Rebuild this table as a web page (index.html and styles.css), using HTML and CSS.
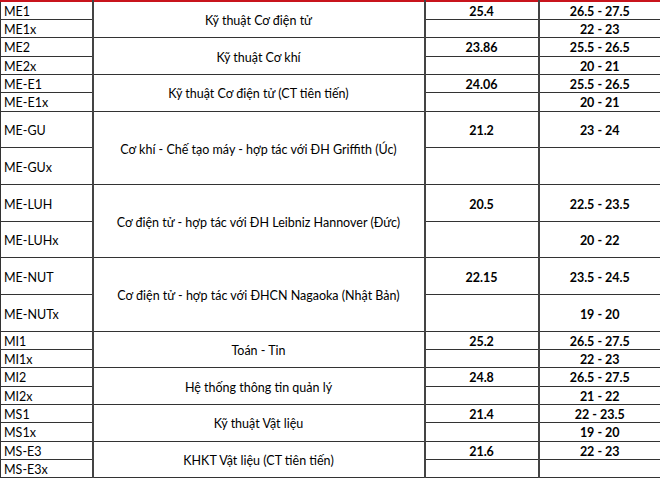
FILE: index.html
```html
<!DOCTYPE html>
<html lang="vi">
<head>
<meta charset="utf-8">
<title>Điểm chuẩn</title>
<link rel="stylesheet" href="styles.css">
</head>
<body>
<table class="scores">
  <colgroup>
    <col class="c-code"><col class="c-name"><col class="c-score"><col class="c-range">
  </colgroup>
  <tbody>
    <tr class="s"><td class="code">ME1</td><td class="name" rowspan="2">Kỹ thuật Cơ điện tử</td><td class="num">25.4</td><td class="num">26.5 - 27.5</td></tr>
    <tr class="s"><td class="code">ME1x</td><td class="num"></td><td class="num">22 - 23</td></tr>
    <tr class="s"><td class="code">ME2</td><td class="name" rowspan="2">Kỹ thuật Cơ khí</td><td class="num">23.86</td><td class="num">25.5 - 26.5</td></tr>
    <tr class="s"><td class="code">ME2x</td><td class="num"></td><td class="num">20 - 21</td></tr>
    <tr class="s"><td class="code">ME-E1</td><td class="name" rowspan="2">Kỹ thuật Cơ điện tử (CT tiên tiến)</td><td class="num">24.06</td><td class="num">25.5 - 26.5</td></tr>
    <tr class="s"><td class="code">ME-E1x</td><td class="num"></td><td class="num">20 - 21</td></tr>
    <tr class="t"><td class="code">ME-GU</td><td class="name" rowspan="2">Cơ khí - Chế tạo máy - hợp tác với ĐH Griffith (Úc)</td><td class="num">21.2</td><td class="num">23 - 24</td></tr>
    <tr class="t"><td class="code">ME-GUx</td><td class="num"></td><td class="num"></td></tr>
    <tr class="t"><td class="code">ME-LUH</td><td class="name" rowspan="2">Cơ điện tử - hợp tác với ĐH Leibniz Hannover (Đức)</td><td class="num">20.5</td><td class="num">22.5 - 23.5</td></tr>
    <tr class="t"><td class="code">ME-LUHx</td><td class="num"></td><td class="num">20 - 22</td></tr>
    <tr class="t"><td class="code">ME-NUT</td><td class="name" rowspan="2">Cơ điện tử - hợp tác với ĐHCN Nagaoka (Nhật Bản)</td><td class="num">22.15</td><td class="num">23.5 - 24.5</td></tr>
    <tr class="t"><td class="code">ME-NUTx</td><td class="num"></td><td class="num">19 - 20</td></tr>
    <tr class="s"><td class="code">MI1</td><td class="name" rowspan="2">Toán - Tin</td><td class="num">25.2</td><td class="num">26.5 - 27.5</td></tr>
    <tr class="s"><td class="code">MI1x</td><td class="num"></td><td class="num">22 - 23</td></tr>
    <tr class="s"><td class="code">MI2</td><td class="name" rowspan="2">Hệ thống thông tin quản lý</td><td class="num">24.8</td><td class="num">26.5 - 27.5</td></tr>
    <tr class="s"><td class="code">MI2x</td><td class="num"></td><td class="num">21 - 22</td></tr>
    <tr class="s"><td class="code">MS1</td><td class="name" rowspan="2">Kỹ thuật Vật liệu</td><td class="num">21.4</td><td class="num">22 - 23.5</td></tr>
    <tr class="s"><td class="code">MS1x</td><td class="num"></td><td class="num">19 - 20</td></tr>
    <tr class="s"><td class="code">MS-E3</td><td class="name" rowspan="2">KHKT Vật liệu (CT tiên tiến)</td><td class="num">21.6</td><td class="num">22 - 23</td></tr>
    <tr class="s"><td class="code">MS-E3x</td><td class="num"></td><td class="num"></td></tr>
  </tbody>
</table>
</body>
</html>
```

FILE: styles.css
```css
html, body {
  margin: 0;
  padding: 0;
  background: #ffffff;
}

.scores {
  width: 660px;
  border-collapse: collapse;
  table-layout: fixed;
  font-family: "Lato", "Open Sans", sans-serif;
  font-size: 12.5px;
  color: #000000;
  border-top: 2px solid #c8141c;
}

.c-code { width: 92px; }
.c-name { width: 332px; }
.c-score { width: 114px; }
.c-range { width: 122px; }

.scores td {
  border: 1px solid #333333;
  padding: 0 2px;
  line-height: 14px;
  vertical-align: middle;
  white-space: nowrap;
  overflow: hidden;
}

.scores td + td {
  border-left: 2px solid #444444;
}

.scores tr.s td {
  height: 18.33px;
  padding-top: 3px;
  box-sizing: border-box;
}

.scores tr.t td {
  height: 36.67px;
  padding-top: 4px;
  box-sizing: border-box;
}

.scores td.name {
  text-align: center;
  padding-top: 3px;
}

.scores td.num {
  text-align: center;
  font-weight: bold;
}

.scores td.code {
  text-align: left;
  padding-left: 3px;
}
```
